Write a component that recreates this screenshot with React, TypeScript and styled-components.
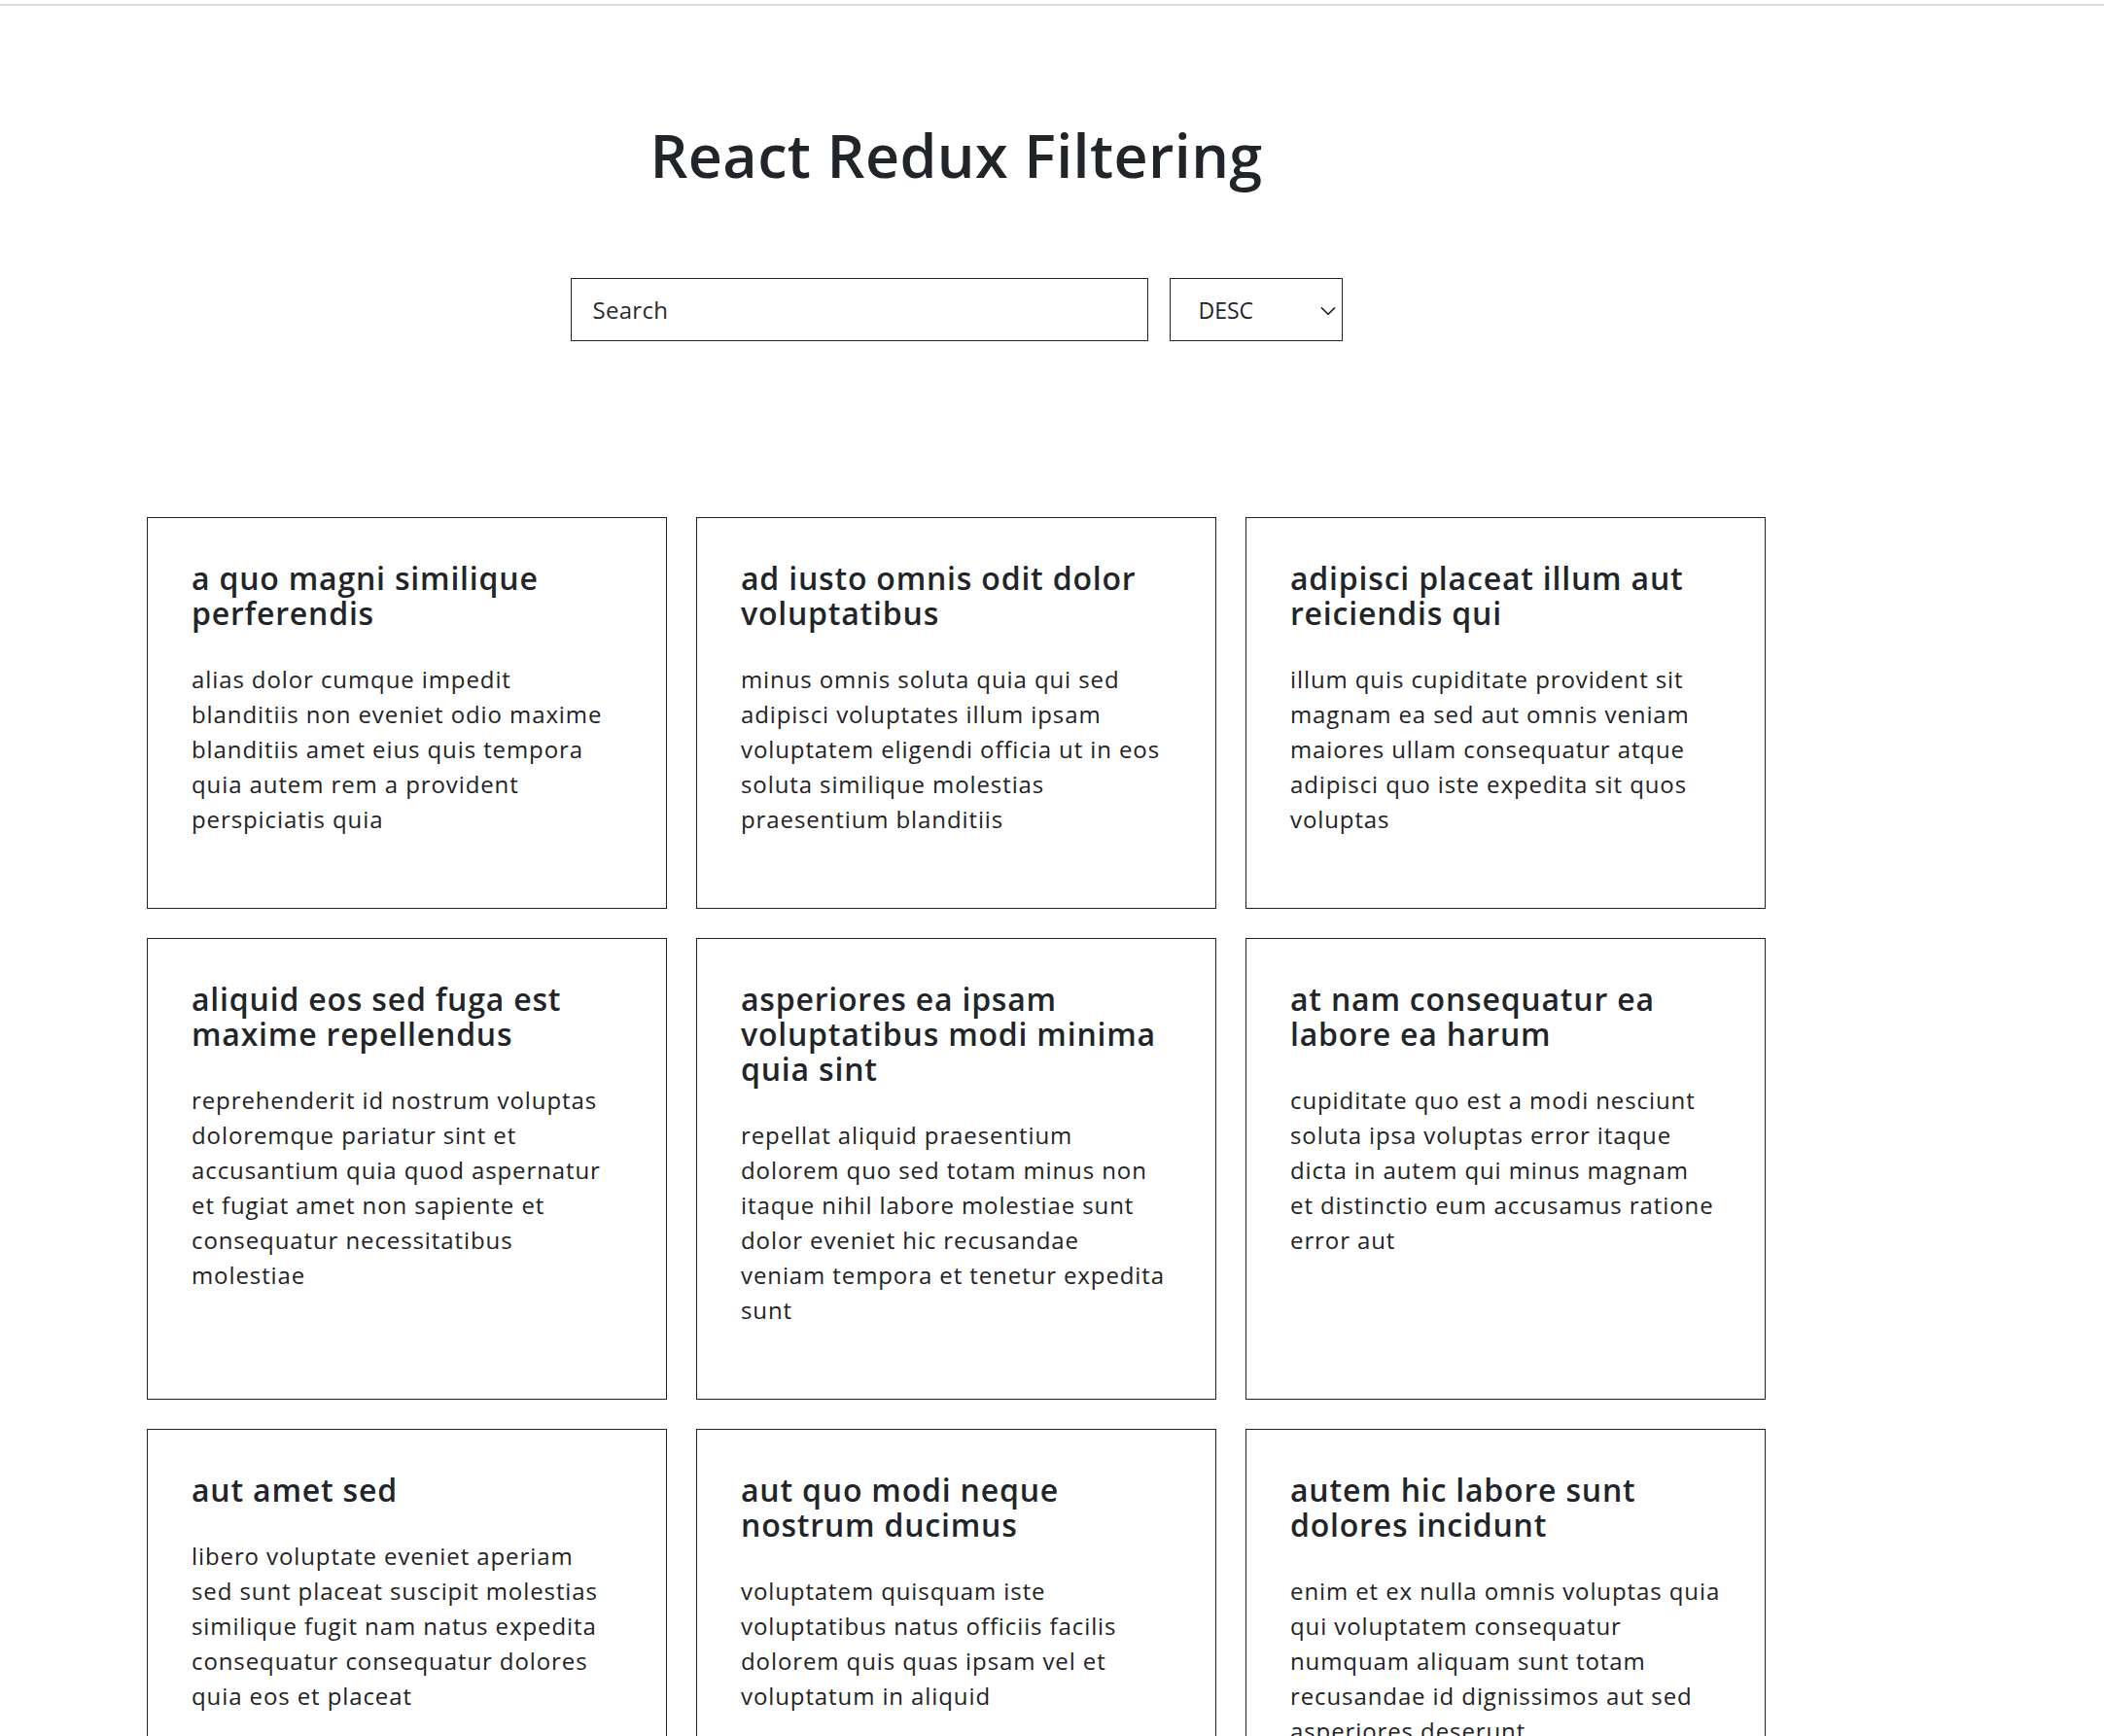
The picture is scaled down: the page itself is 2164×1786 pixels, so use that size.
import { useMemo, useState } from "react";
import styled, { createGlobalStyle } from "styled-components";

interface IPost {
    id: number;
    title: string;
    body: string;
}

// line breaks follow the layout of the original card grid
const posts: IPost[] = [
    {
        id: 1,
        title: "a quo magni similique\nperferendis",
        body: "alias dolor cumque impedit\nblanditiis non eveniet odio maxime\nblanditiis amet eius quis tempora\nquia autem rem a provident\nperspiciatis quia",
    },
    {
        id: 2,
        title: "ad iusto omnis odit dolor\nvoluptatibus",
        body: "minus omnis soluta quia qui sed\nadipisci voluptates illum ipsam\nvoluptatem eligendi officia ut in eos\nsoluta similique molestias\npraesentium blanditiis",
    },
    {
        id: 3,
        title: "adipisci placeat illum aut\nreiciendis qui",
        body: "illum quis cupiditate provident sit\nmagnam ea sed aut omnis veniam\nmaiores ullam consequatur atque\nadipisci quo iste expedita sit quos\nvoluptas",
    },
    {
        id: 4,
        title: "aliquid eos sed fuga est\nmaxime repellendus",
        body: "reprehenderit id nostrum voluptas\ndoloremque pariatur sint et\naccusantium quia quod aspernatur\net fugiat amet non sapiente et\nconsequatur necessitatibus\nmolestiae",
    },
    {
        id: 5,
        title: "asperiores ea ipsam\nvoluptatibus modi minima\nquia sint",
        body: "repellat aliquid praesentium\ndolorem quo sed totam minus non\nitaque nihil labore molestiae sunt\ndolor eveniet hic recusandae\nveniam tempora et tenetur expedita\nsunt",
    },
    {
        id: 6,
        title: "at nam consequatur ea\nlabore ea harum",
        body: "cupiditate quo est a modi nesciunt\nsoluta ipsa voluptas error itaque\ndicta in autem qui minus magnam\net distinctio eum accusamus ratione\nerror aut",
    },
    {
        id: 7,
        title: "aut amet sed",
        body: "libero voluptate eveniet aperiam\nsed sunt placeat suscipit molestias\nsimilique fugit nam natus expedita\nconsequatur consequatur dolores\nquia eos et placeat",
    },
    {
        id: 8,
        title: "aut quo modi neque\nnostrum ducimus",
        body: "voluptatem quisquam iste\nvoluptatibus natus officiis facilis\ndolorem quis quas ipsam vel et\nvoluptatum in aliquid",
    },
    {
        id: 9,
        title: "autem hic labore sunt\ndolores incidunt",
        body: "enim et ex nulla omnis voluptas quia\nqui voluptatem consequatur\nnumquam aliquam sunt totam\nrecusandae id dignissimos aut sed\nasperiores deserunt",
    },
];

export default function App() {
    const [search, setSearch] = useState("");
    const [order, setOrder] = useState("DESC");

    const filtered = useMemo(() => {
        const list = posts.filter((post) =>
            post.title.toLowerCase().includes(search.toLowerCase())
        );
        return order === "DESC" ? list : [...list].reverse();
    }, [search, order]);

    return (
        <>
            <GlobalStyle />
            <TopRule />
            <Container>
                <Title>React Redux Filtering</Title>
                <Controls>
                    <SearchInput
                        type="text"
                        placeholder="Search"
                        value={search}
                        onChange={(e) => setSearch(e.target.value)}
                    />
                    <SelectWrap>
                        <OrderSelect value={order} onChange={(e) => setOrder(e.target.value)}>
                            <option value="DESC">DESC</option>
                            <option value="ASC">ASC</option>
                        </OrderSelect>
                        <Chevron width="16" height="9" viewBox="0 0 16 9" aria-hidden="true">
                            <polyline points="1,1 8,8 15,1" />
                        </Chevron>
                    </SelectWrap>
                </Controls>
                <PostGrid>
                    {filtered.map((post) => (
                        <PostCard key={post.id}>
                            <PostTitle>{post.title}</PostTitle>
                            <PostBody>{post.body}</PostBody>
                        </PostCard>
                    ))}
                </PostGrid>
            </Container>
        </>
    );
}

const GlobalStyle = createGlobalStyle`
    * {
        box-sizing: border-box;
    }

    body {
        margin: 0;
        background: #ffffff;
        color: #212529;
        font-family: "Open Sans", "Liberation Sans", sans-serif;
    }
`;

const TopRule = styled.div`
    height: 6px;
    border-bottom: 2px solid #dcdcdc;
`;

const Container = styled.main`
    width: 1665px;
    margin-left: 151px;
    display: flex;
    flex-direction: column;
    align-items: center;
`;

const Title = styled.h1`
    margin: 114px 0 0;
    font-size: 61px;
    line-height: 80px;
    font-weight: 600;
    letter-spacing: 0.4px;
    color: #212529;
`;

const Controls = styled.div`
    margin-top: 86px;
    display: flex;
    gap: 22px;
`;

const SearchInput = styled.input`
    width: 594px;
    height: 65px;
    padding: 0 22px;
    border: 1px solid #222222;
    border-radius: 0;
    font-family: inherit;
    font-size: 24px;
    letter-spacing: 0.3px;
    color: #212529;
    outline: none;

    &::placeholder {
        color: #2b2b2b;
    }
`;

const SelectWrap = styled.div`
    position: relative;
    width: 178px;
    height: 65px;
`;

const OrderSelect = styled.select`
    appearance: none;
    width: 100%;
    height: 100%;
    padding: 0 30px 0 29px;
    border: 1px solid #222222;
    border-radius: 0;
    background: #ffffff;
    font-family: inherit;
    font-size: 23px;
    color: #212529;
    outline: none;
`;

const Chevron = styled.svg`
    position: absolute;
    right: 7px;
    top: 50%;
    transform: translateY(-40%);
    pointer-events: none;
    fill: none;
    stroke: #2b2b2b;
    stroke-width: 1.6;
`;

const PostGrid = styled.section`
    margin-top: 181px;
    width: 100%;
    display: grid;
    grid-template-columns: repeat(3, 535px);
    gap: 30px;
`;

const PostCard = styled.article`
    border: 1px solid #222222;
    padding: 44px 45px 73px;
`;

const PostTitle = styled.h3`
    margin: 0 0 32px;
    font-size: 32px;
    line-height: 36px;
    font-weight: 600;
    letter-spacing: 0.8px;
    white-space: pre;
    color: #212529;
`;

const PostBody = styled.p`
    margin: 0;
    font-size: 24px;
    line-height: 36px;
    font-weight: 400;
    letter-spacing: 0.9px;
    white-space: pre;
    color: #1f2225;
`;
